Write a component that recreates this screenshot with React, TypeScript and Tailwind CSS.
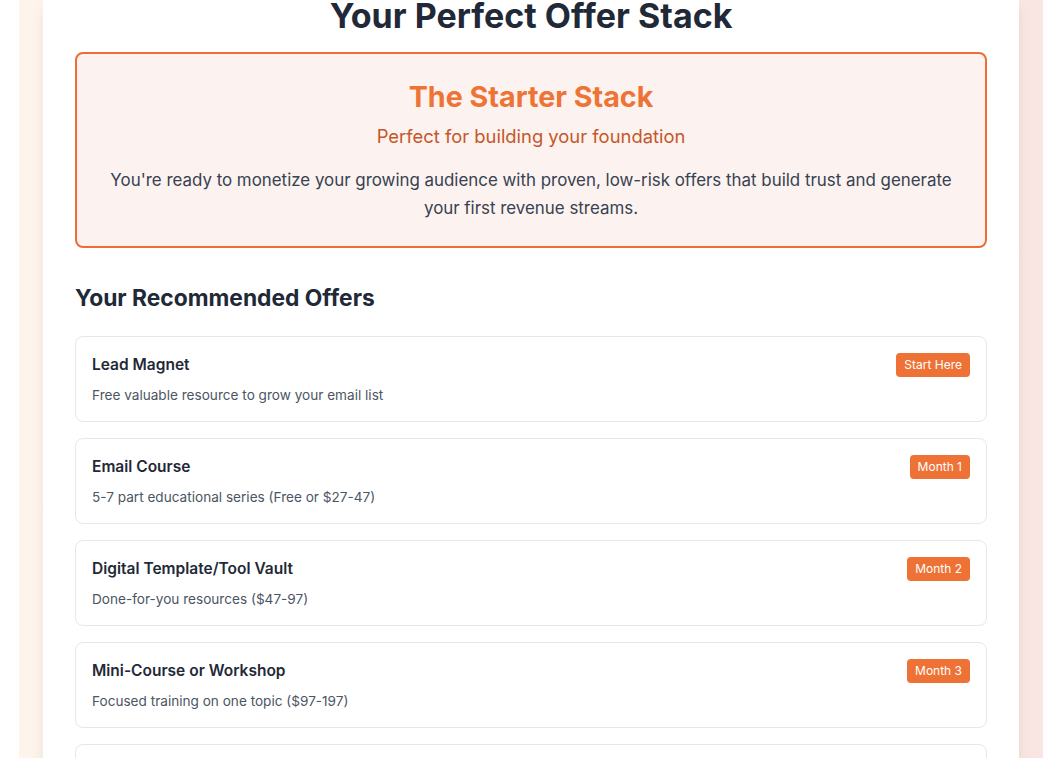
import React from 'react';

const offers = [
  { title: 'Lead Magnet', desc: 'Free valuable resource to grow your email list', badge: 'Start Here' },
  { title: 'Email Course', desc: '5-7 part educational series (Free or $27-47)', badge: 'Month 1' },
  { title: 'Digital Template/Tool Vault', desc: 'Done-for-you resources ($47-97)', badge: 'Month 2' },
  { title: 'Mini-Course or Workshop', desc: 'Focused training on one topic ($97-197)', badge: 'Month 3' },
  { title: 'Group Coaching Program', desc: 'Ongoing support and community', badge: 'Month 6' },
];

export default function App() {
  return (
    <div
      className="h-[758px] overflow-hidden bg-white"
      style={{ fontFamily: 'Inter, "Noto Sans", sans-serif' }}
    >
      <div className="ml-[19px] w-[1024px] bg-gradient-to-r from-[#fdf5ec] to-[#f9e6e3] px-6">
        {/* Results card */}
        <div className="bg-white shadow-lg px-8 pb-10 -mt-[4px]">
          <h1 className="text-[34px] leading-[40px] font-bold text-[#1f2937] text-center mb-4">
            Your Perfect Offer Stack
          </h1>

          {/* Stack summary */}
          <div className="border-2 border-[#ee6d33] bg-[#fcf2ef] rounded-lg px-6 pt-[25px] pb-[24px] text-center">
            <h2 className="text-[28.7px] leading-[36px] font-bold text-[#ee7436]">The Starter Stack</h2>
            <p className="text-[18.4px] leading-7 text-[#c5582a] mt-[7px]">Perfect for building your foundation</p>
            <p className="text-[16.9px] leading-7 text-[#374151] mt-[16px]">
              You're ready to monetize your growing audience with proven, low-risk offers that build trust and generate your first revenue streams.
            </p>
          </div>

          {/* Offers */}
          <h3 className="text-[22.8px] leading-8 font-bold text-[#1f2937] mt-[34px] mb-[22px]">Your Recommended Offers</h3>
          <div className="flex flex-col gap-4">
            {offers.map((o) => (
              <div key={o.title} className="border border-[#e5e7eb] rounded-lg p-4 bg-white">
                <div className="flex items-start justify-between">
                  <span className="text-[15.5px] leading-6 font-semibold text-[#1f2937]">{o.title}</span>
                  <span className="bg-[#ee7235] text-white text-xs leading-4 px-2 py-1 rounded">{o.badge}</span>
                </div>
                <p className="text-[13.6px] leading-5 text-[#4b5563] mt-2">{o.desc}</p>
              </div>
            ))}
          </div>
        </div>
      </div>
    </div>
  );
}
